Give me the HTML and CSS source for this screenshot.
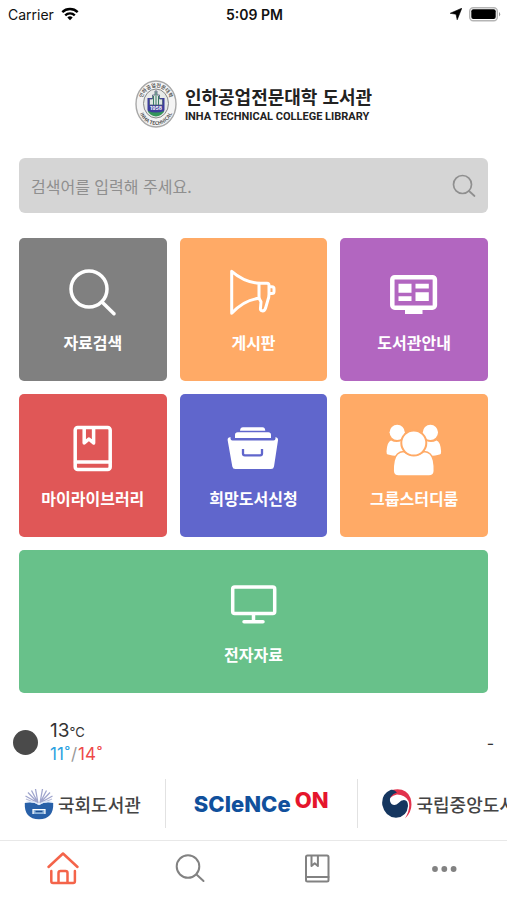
FILE: index.html
```
<!DOCTYPE html>
<html lang="ko">
<head>
<meta charset="utf-8">
<meta name="viewport" content="width=device-width, initial-scale=1">
<title>인하공업전문대학 도서관</title>
<link rel="stylesheet" href="styles.css">
</head>
<body>
<div class="status">
  <div class="status-side">
    <span>Carrier</span>
    <svg width="18" height="14" viewBox="0 0 18 14" fill="none" stroke="#000" stroke-width="2.4" aria-hidden="true"><path d="M1.3 5.2a11 11 0 0 1 15.4 0M4.2 8.3a7 7 0 0 1 9.6 0"/><path d="M9 13.2 6.3 10.5a4 4 0 0 1 5.4 0z" fill="#000" stroke="none"/></svg>
  </div>
  <div class="status-time">5:09 PM</div>
  <div class="status-side status-right">
    <svg width="12" height="12" viewBox="0 0 12 12" aria-hidden="true"><path d="M11.8.2 7.2 11.800 6 6.200 .2 5.300z" stroke="#000" stroke-width=".6"/></svg>
    <svg width="32" height="15" viewBox="0 0 32 15" aria-hidden="true"><rect x=".7" y=".7" width="27.6" height="13" rx="3.5" fill="#fff" stroke="#b5b5b5" stroke-width="1.4"/><rect x="2.3" y="2.3" width="24.4" height="9.8" rx="2"/><path d="M30 5v4.400a2.600 2.600 0 0 0 0-4.400z" fill="#999"/></svg>
  </div>
</div>

<header class="brand">
  <svg class="emblem" width="42" height="48" viewBox="0 0 42 48" aria-hidden="true">
    <defs><path id="arc-top" d="M7 28a14.500 16.500 0 1 1 28 0"/><path id="arc-bottom" d="M3.500 26a17.500 19 0 0 0 35 0"/></defs>
    <ellipse cx="21" cy="24" rx="20" ry="23" fill="#f4f4f4" stroke="#a8a8a8" stroke-width="1.400"/>
    <ellipse cx="21" cy="23.500" rx="12.500" ry="14.500" fill="#e8eae8" stroke="#888"/>
    <text class="emblem-text"><textPath href="#arc-top" startOffset="50%" text-anchor="middle">인하공업전문대학</textPath></text>
    <text class="emblem-text"><textPath href="#arc-bottom" startOffset="50%" text-anchor="middle">INHA TECHNICAL</textPath></text>
    <path d="M12.500 18h17v12q-1 4-8.500 6-7.500-2-8.500-6z" fill="#3d3d9c"/>
    <path d="M12.700 31q8 3 16.600 0-1.500 4-8.300 5.600-6.800-1.600-8.300-5.600z" fill="#35965a"/>
    <path d="M14.500 25v-6h3v-4h2.500v-4h2v4h2.500v4h3v6z" fill="#dfe6e2" stroke="#4b5a78" stroke-width=".8"/>
    <path d="M18.500 16v9M21 12v13M23.500 16v9" stroke="#3b7c65" stroke-width="1"/>
    <text class="emblem-year" x="21" y="30" text-anchor="middle">1958</text>
  </svg>
  <div>
    <h1 class="brand-name">인하공업전문대학 도서관</h1>
    <p class="brand-sub">INHA TECHNICAL COLLEGE LIBRARY</p>
  </div>
</header>

<main class="main">
  <form class="search" role="search">
    <input class="search-input" type="search" aria-label="검색어" placeholder="검색어를 입력해 주세요.">
    <button class="search-button" type="submit" aria-label="검색">
      <svg width="24" height="24" viewBox="0 0 24 24" fill="none" stroke="#8f8f8f" stroke-width="1.700" stroke-linecap="round"><circle cx="10.500" cy="10.500" r="9"/><path d="m17 17 5.500 5"/></svg>
    </button>
  </form>

  <nav class="tiles" aria-label="주요 메뉴">
    <a class="tile gray" href="#search">
      <svg class="tile-icon" viewBox="0 0 52 52"><g class="line"><circle cx="22" cy="23" r="18"/><path d="m35 36 12 11.700"/></g></svg>
      <span>자료검색</span>
    </a>
    <a class="tile orange" href="#board">
      <svg class="tile-icon" viewBox="0 0 52 52"><g class="line thin"><path d="M4.700 5.300v42Q17 34 32 32.300V17.300Q17 16 4.700 5.300z"/><path d="M32 17.300h8q2 0 2 2v9q0 3-1.200 6l-2.300 8q-1 3-3.500 2.500-2-.3-1.500-3l.5-6-2-3.500"/><path d="M42.500 20.800h2.500q2 0 2 2v2.700q0 2-2 2h-2.500"/></g></svg>
      <span>게시판</span>
    </a>
    <a class="tile purple" href="#guide">
      <svg class="tile-icon" viewBox="0 0 52 52"><rect x="4.300" y="11.200" width="42.600" height="30.500" rx="2.500" fill="none" stroke="#fff" stroke-width="4.500"/><path fill="#fff" d="M17 43h17.500v5H17zM10.500 17.700h13v9h-13zM27.500 17.700h13.300v4.700H27.500zM10.500 30.300h13V35h-13zM27.500 26.300h13.300V35H27.500z"/></svg>
      <span>도서관안내</span>
    </a>
    <a class="tile red" href="#my">
      <svg class="tile-icon" viewBox="0 0 52 52"><g class="line"><rect x="8.200" y="5.500" width="35" height="42" rx="2.500"/><path d="M8.500 40h34.500M17.200 6v15l4.700-4 4.700 4V6"/></g></svg>
      <span>마이라이브러리</span>
    </a>
    <a class="tile blue" href="#request">
      <svg class="tile-icon" viewBox="0 0 52 52"><path fill="#fff" d="M13 8.700q.3-3.400 3-3.400h19.500q2.500 0 2.800 3.400zM8 16v-3q0-2.700 2.700-2.700h30.600q2.700 0 2.700 2.700v3zM3.500 15v1.500q0 2 2 2h41q2 0 2-2V15l1.500.8q1.200.7 1 2.500l-4 26.200q-.4 2.500-3 2.500H8.300q-2.500 0-3-2.500l-4.600-26q-.3-2 .8-2.700z"/><path d="M16 27v4.500q0 1.800 1.800 1.800h15.400q1.800 0 1.800-1.800V27" fill="none" stroke="#6066cc" stroke-width="2.300"/></svg>
      <span>희망도서신청</span>
    </a>
    <a class="tile orange" href="#study">
      <svg class="tile-icon" viewBox="0 0 52 52"><g fill="#fff"><path d="M3 18.500q5 2.800 10.500.5.200 8 4.500 11.500-4 1-6 3.300-7 .4-12-1.300-1.700-.5-1.500-3Q-1 20 3 18.500zM48.600 18.500q-5 2.800-10.500.5-.2 8-4.500 11.500 4 1 6 3.300 7 .4 12-1.300 1.700-.5 1.500-3-.5-9.500-4.500-11z"/><circle cx="9.200" cy="10.300" r="7.600"/><circle cx="42.400" cy="10.300" r="7.600"/><path d="M15.500 29.500q10.300 7.500 20.600 0 7.500.5 9.400 9 1 5 .8 10.500-.3 5-5.300 5H10.500q-5 0-5.300-5-.2-5.500.9-10.500 2-8.500 9.400-9z" stroke="#ffaa66" stroke-width="1.500"/><circle cx="25.800" cy="21" r="12.500" stroke="#ffaa66" stroke-width="2"/></g></svg>
      <span>그룹스터디룸</span>
    </a>
    <a class="tile green" href="#digital">
      <svg class="tile-icon" viewBox="0 0 52 52"><g class="line"><rect x="4.700" y="9" width="42" height="26.500" rx="2"/><path d="M25.500 36v7.500M16 43.700h19"/></g></svg>
      <span>전자자료</span>
    </a>
  </nav>
</main>

<section class="weather" aria-label="날씨">
  <span class="weather-dot"></span>
  <div class="weather-temps">
    <div class="now">13<span class="unit">°C</span></div>
    <div class="range"><span class="low">11</span><span class="low">˚</span><span>/</span><span class="high">14</span><span class="high">˚</span></div>
  </div>
  <span>-</span>
</section>

<nav class="partners" aria-label="관련 사이트">
  <a class="partner" href="#nanet">
    <svg width="30" height="32" viewBox="0 0 30 32" aria-hidden="true"><g stroke="#8088bd" stroke-width="1.300"><path d="M14 15 1.500 8M14 15 4 4.500M14 15 7.500 2.500M14 15 11.500 1M16 15l2.500-14M16 15l6.500-12.500M16 15 26 4.500M16 15l12.500-7" opacity=".75"/><path d="m14 16-12-5M16 16l12-5" opacity=".55"/></g><path d="M.8 15q8-2 14.200 2 6.200-4 14.200-2Q30 31 15 31.300 0 31 .8 15z" fill="#2860a8"/><path d="M2 14q8-1.500 13 2.500 5-4 13-2.500" fill="none" stroke="#dce8fa" stroke-width="1.200"/><path d="M9 26v-4.500h12V26" fill="#8fb5dc" stroke="#fff" stroke-width="1.200"/><path d="M11.500 23.500h7" stroke="#1b4c91" stroke-width="1.500"/></svg>
    <span>국회도서관</span>
  </a>
  <a class="partner science" href="#scienceon"><span>SCIeNCe</span><span class="science-on">ON</span></a>
  <a class="partner" href="#nl">
    <svg width="30" height="30" viewBox="0 0 30 30" aria-hidden="true"><path d="M10 1Q24-2 28.500 9 32 21 23 29.500 29 19 26.500 12 23 5.500 15 5.500 11 6 8 9z" fill="#e2334d"/><path d="M9 .8Q-1 5 .3 16 3 28 14 28.800 25 28 26 17q0-6-4-6-3 0-5.500 3-3.500 3.500-7 1-3-3.500-.5-7.500 2-3 6-4Q12 0 9 .8z" fill="#15365f"/></svg>
    <span>국립중앙도서관</span>
  </a>
</nav>

<nav class="tabbar" aria-label="하단 메뉴">
  <a class="tab active" href="#home" aria-label="홈"><svg width="34" height="34" viewBox="0 0 34 34"><path d="M2.500 16 17 2.500 31.500 16M5.300 20v10.200q0 1.800 1.800 1.800h20q1.800 0 1.800-1.800V20M12.500 32V22q0-2 2-2h5q2 0 2 2v10"/></svg></a>
  <a class="tab" href="#find" aria-label="검색"><svg width="34" height="34" viewBox="0 0 34 34"><circle cx="15" cy="15.500" r="11.300"/><path d="m23.500 23.500 7 6.500"/></svg></a>
  <a class="tab" href="#library" aria-label="서재"><svg width="34" height="34" viewBox="0 0 34 34"><rect x="6" y="4.500" width="22.500" height="26" rx="1.500"/><path d="M6 26h22.500M11.500 5v10l3.200-2.700 3.200 2.700V5"/></svg></a>
  <a class="tab" href="#more" aria-label="더보기"><svg width="34" height="34" viewBox="0 0 34 34"><g fill="#828282" stroke="none"><circle cx="8" cy="18" r="2.900"/><circle cx="17.300" cy="18" r="2.900"/><circle cx="26.600" cy="18" r="2.900"/></g></svg></a>
</nav>
</body>
</html>
```
FILE: styles.css
```
* { box-sizing: border-box; }

body {
  margin: 0;
  min-height: 100vh;
  display: flex;
  flex-direction: column;
  background: #fff;
  color: #333;
  font-family: Inter, "Noto Sans CJK KR", sans-serif;
  overflow-x: hidden;
}

a { color: inherit; text-decoration: none; }
h1, p { margin: 0; }
svg { display: block; flex: none; }

.status {
  display: grid;
  grid-template-columns: 1fr auto 1fr;
  align-items: center;
  height: 28px;
  padding: 0 6px 0 8px;
  color: #111;
  font-size: 14px;
}
.status-side { display: flex; align-items: center; gap: 7px; }
.status-right { justify-content: flex-end; }
.status-time { font-weight: 600; }

.brand {
  display: flex;
  align-items: center;
  justify-content: center;
  gap: 8px;
  padding: 52px 0 30px;
}
.brand-name {
  color: #222;
  font: 700 18px/26px "Noto Sans CJK KR", sans-serif;
  white-space: nowrap;
}
.brand-sub {
  color: #222;
  font: 700 11px/16px Roboto, sans-serif;
}
.emblem-text { font: 700 5px "Noto Sans CJK KR", sans-serif; fill: #555; }
.emblem-year { font: 700 5px Inter, sans-serif; fill: #fff; }

.main { padding: 0 19px; }

.search {
  display: flex;
  align-items: center;
  height: 55px;
  padding: 0 12px;
  border-radius: 6px;
  background: #d5d5d5;
}
.search-input {
  flex: 1;
  min-width: 0;
  padding: 0;
  border: 0;
  outline: 0;
  background: none;
  color: #555;
  font: 400 16px/24px "Noto Sans CJK KR", sans-serif;
}
.search-input::placeholder { color: #8f8f8f; opacity: 1; }
.search-button { padding: 0; border: 0; background: none; }

.tiles {
  display: grid;
  grid-template-columns: repeat(3, 1fr);
  gap: 13px;
  margin-top: 25px;
}
.tile {
  display: flex;
  flex-direction: column;
  align-items: center;
  gap: 12px;
  height: 143px;
  padding-top: 28px;
  border-radius: 5px;
  color: #fff;
  font: 700 16px/24px "Noto Sans CJK KR", sans-serif;
}
.tile-icon { width: 52px; height: 52px; overflow: visible; }
.line {
  fill: none;
  stroke: #fff;
  stroke-width: 3.5;
  stroke-linecap: round;
  stroke-linejoin: round;
}
.thin { stroke-width: 3; }
.gray { background: #808080; }
.orange { background: #ffaa66; }
.purple { background: #b266c0; }
.red { background: #e05757; }
.blue { background: #6066cc; }
.green { background: #68c18a; grid-column: 1 / -1; }

.weather {
  display: flex;
  align-items: center;
  gap: 12px;
  margin-top: 27px;
  padding: 0 13px;
}
.weather-dot { width: 25px; height: 25px; border-radius: 50%; background: #4a4a4a; }
.weather-temps { flex: 1; }
.now { font-size: 19px; line-height: 22px; }
.unit { font-size: 13px; }
.range { display: flex; gap: 1px; color: #999; font-size: 17px; line-height: 22px; }
.low { color: #2ba0e0; }
.high { color: #ee4848; }

.partners {
  display: flex;
  margin: 14px 0 12px;
  overflow: hidden;
}
.partner {
  display: flex;
  flex: none;
  align-items: center;
  gap: 4px;
  height: 49px;
  padding: 0 24px;
  color: #444;
  font: 500 18px/24px "Noto Sans CJK KR", sans-serif;
}
.partner + .partner { border-left: 1px solid #e2e2e2; }
.science { padding: 0 29px 0 28px; color: #10509c; font: 800 22px/24px Inter, sans-serif; }
.partner .science-on { align-self: flex-start; margin-top: 9px; color: #e5152c; font-size: 22px; }

.tabbar {
  display: grid;
  grid-template-columns: repeat(4, 1fr);
  height: 60px;
  margin-top: auto;
  border-top: 1px solid #e8e8e8;
}
.tab { display: flex; justify-content: center; padding-top: 10px; }
.tab svg {
  fill: none;
  stroke: #828282;
  stroke-width: 2;
  stroke-linecap: round;
  stroke-linejoin: round;
}
.tab.active svg { stroke: #f4644a; stroke-width: 2.5; }
```
